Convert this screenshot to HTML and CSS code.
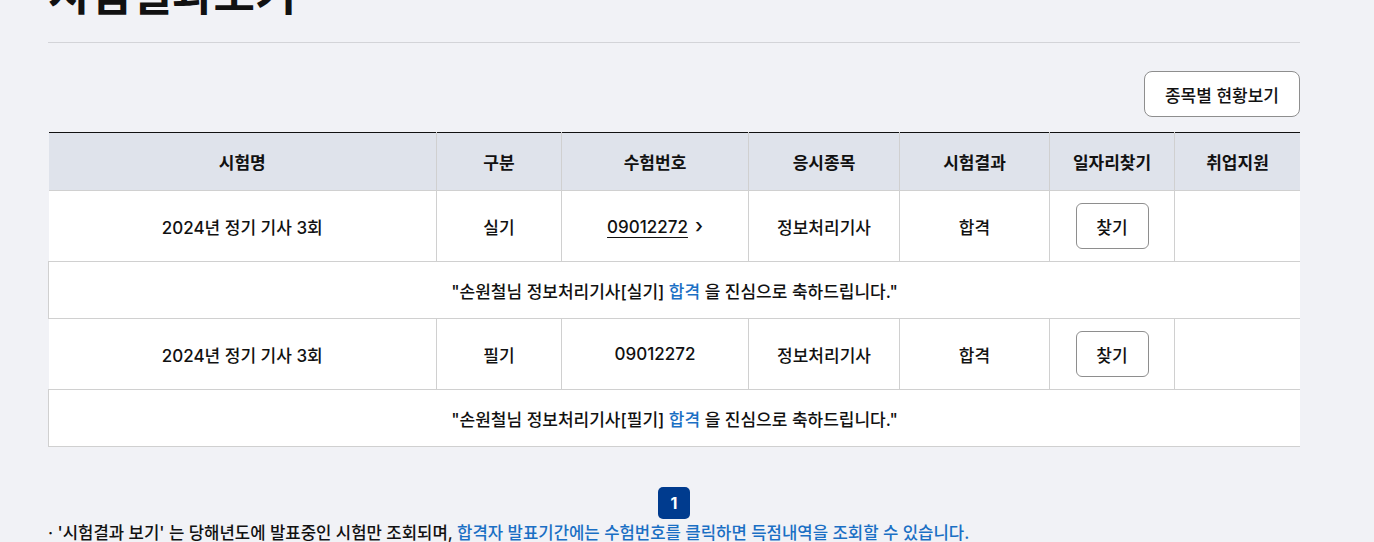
FILE: index.html
```html
<!DOCTYPE html>
<html lang="ko">
<head>
    <meta charset="UTF-8">
    <meta name="viewport" content="width=device-width, initial-scale=1.0">
    <title>시험결과보기</title>
    <link rel="stylesheet" href="styles.css">
</head>
<body>
    <div class="content">
        <h2 class="page-title">시험결과보기</h2>

        <div class="top-actions">
            <button class="btn-line">종목별 현황보기</button>
        </div>

        <table class="result-table">
            <colgroup>
                <col style="width: 388px">
                <col style="width: 125px">
                <col style="width: 187px">
                <col style="width: 151px">
                <col style="width: 150px">
                <col style="width: 125px">
                <col>
            </colgroup>
            <thead>
                <tr>
                    <th>시험명</th>
                    <th>구분</th>
                    <th>수험번호</th>
                    <th>응시종목</th>
                    <th>시험결과</th>
                    <th>일자리찾기</th>
                    <th>취업지원</th>
                </tr>
            </thead>
            <tbody>
                <tr>
                    <td>2024년 정기 기사 3회</td>
                    <td>실기</td>
                    <td><a href="#" class="exam-no">09012272</a><span class="arrow">&rsaquo;</span></td>
                    <td>정보처리기사</td>
                    <td>합격</td>
                    <td><button class="btn-find">찾기</button></td>
                    <td></td>
                </tr>
                <tr class="msg-row">
                    <td colspan="7">"손원철님 정보처리기사[실기] <span class="pass">합격</span> 을 진심으로 축하드립니다."</td>
                </tr>
                <tr>
                    <td>2024년 정기 기사 3회</td>
                    <td>필기</td>
                    <td>09012272</td>
                    <td>정보처리기사</td>
                    <td>합격</td>
                    <td><button class="btn-find">찾기</button></td>
                    <td></td>
                </tr>
                <tr class="msg-row">
                    <td colspan="7">"손원철님 정보처리기사[필기] <span class="pass">합격</span> 을 진심으로 축하드립니다."</td>
                </tr>
            </tbody>
        </table>

        <div class="paging">
            <a href="#" class="page-num on">1</a>
        </div>

        <p class="note">· '시험결과 보기' 는 당해년도에 발표중인 시험만 조회되며, <span class="blue">합격자 발표기간에는 수험번호를 클릭하면 득점내역을 조회할 수 있습니다.</span></p>
    </div>
</body>
</html>
```

FILE: styles.css
```css
body {
    margin: 0;
    background: #f1f2f6;
    font-family: Inter, "Noto Sans CJK KR", sans-serif;
    color: #111;
    overflow: hidden;
}

.content {
    margin: -35px 74px 0 48px;
}

.page-title {
    font-size: 45px;
    font-weight: 700;
    line-height: 60px;
    margin: 0;
    padding-bottom: 17px;
    border-bottom: 1px solid #d3d4d8;
}

.top-actions {
    display: flex;
    justify-content: flex-end;
    margin-top: 28px;
    margin-bottom: 15px;
}

.btn-line {
    height: 46px;
    padding: 0 20px;
    background: #fff;
    border: 1px solid #8e8e8e;
    border-radius: 8px;
    font-family: inherit;
    font-size: 17px;
    font-weight: 500;
    color: #111;
    cursor: pointer;
}

.result-table {
    width: 100%;
    border-collapse: collapse;
    table-layout: fixed;
    border-top: 1px solid #111;
    font-size: 17px;
}

.result-table th {
    height: 57px;
    padding: 0;
    background: #dfe3eb;
    font-weight: 700;
    border-left: 1px solid #d0d0d0;
    border-bottom: 1px solid #d0d0d0;
}

.result-table th:first-child {
    border-left: none;
}

.result-table td {
    height: 70px;
    padding: 0;
    text-align: center;
    font-weight: 500;
    background: #fff;
    border-left: 1px solid #d0d0d0;
    border-bottom: 1px solid #d0d0d0;
}

.result-table tbody tr:not(.msg-row) td:first-child {
    border-left: none;
}

.result-table .msg-row td {
    height: 56px;
}

.exam-no {
    color: #111;
    text-decoration: underline;
    text-underline-offset: 4px;
}

.arrow {
    margin-left: 7px;
    font-size: 20px;
}

.btn-find {
    width: 73px;
    height: 46px;
    background: #fff;
    border: 1px solid #8e8e8e;
    border-radius: 6px;
    font-family: inherit;
    font-size: 17px;
    font-weight: 500;
    color: #111;
    cursor: pointer;
}

.pass,
.blue {
    color: #1a6fc4;
}

.paging {
    display: flex;
    justify-content: center;
    margin-top: 40px;
}

.page-num {
    display: flex;
    align-items: center;
    justify-content: center;
    width: 32px;
    height: 32px;
    border-radius: 5px;
    background: #003b8e;
    color: #fff;
    font-size: 16px;
    font-weight: 700;
    text-decoration: none;
}

.note {
    margin: 2px 0 0 0;
    font-size: 16.7px;
    font-weight: 500;
    line-height: 24px;
}
```
